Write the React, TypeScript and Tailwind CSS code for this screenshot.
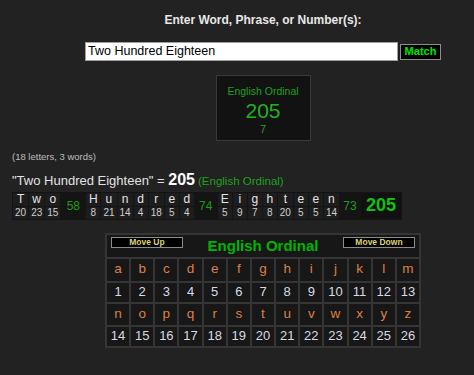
import React from 'react'

const words = [
    { letters: ['T', 'w', 'o'], values: [20, 23, 15], sum: 58, w: 'w-[24px]' },
    { letters: ['H', 'u', 'n', 'd', 'r', 'e', 'd'], values: [8, 21, 14, 4, 18, 5, 4], sum: 74, w: 'w-[22px]' },
    { letters: ['E', 'i', 'g', 'h', 't', 'e', 'e', 'n'], values: [5, 9, 7, 8, 20, 5, 5, 14], sum: 73, w: 'w-[20px]' },
]

const alphabet = 'abcdefghijklmnopqrstuvwxyz'.split('')

function ChartButton({ label }: { label: string }) {
    return (
        <div className="self-start mt-[2px] h-[11px] w-[72px] bg-black border border-[#8c8c8c] flex items-center justify-center text-[8.5px] font-bold leading-none text-[#d9d27a]">
            {label}
        </div>
    )
}

export default function App() {
    const top = alphabet.slice(0, 13)
    const bottom = alphabet.slice(13)

    return (
        <div className="min-h-[375px] w-full bg-[#222222] font-['Liberation_Sans',Arial,sans-serif] overflow-hidden">
            {/* Search block */}
            <div className="pl-[52px] flex flex-col items-center">
                <div className="pt-[13px] text-[12px] leading-[14px] font-bold text-[#e8e8e8]">
                    Enter Word, Phrase, or Number(s):
                </div>
                <div className="mt-[15px] flex items-center gap-[2px]">
                    <div className="w-[313px] h-[19px] bg-white border border-[#a0a0a0] px-[2px] flex items-center text-[12.5px] text-black">
                        Two Hundred Eighteen
                    </div>
                    <div className="w-[41px] h-[16px] bg-black border border-[#8c8c8c] flex items-center justify-center text-[11px] font-bold text-[#00e600]">
                        Match
                    </div>
                </div>
                <div className="mt-[14px] w-[95px] h-[66px] bg-[#121212] border border-[#3a3a3a] flex flex-col items-center">
                    <div className="mt-[9px] text-[10.5px] leading-[12px] text-[#20a020]">English Ordinal</div>
                    <div className="mt-[3px] text-[21px] leading-[22px] text-[#22b022]">205</div>
                    <div className="mt-[1px] text-[11px] leading-[12px] text-[#20a020]">7</div>
                </div>
            </div>

            {/* Breakdown */}
            <div className="px-[12px]">
                <div className="mt-[10px] text-[9.5px] leading-[12px] text-[#bdbdbd]">(18 letters, 3 words)</div>
                <div className="mt-[5px] h-[18px] flex items-baseline text-[13px] text-[#e2e2e2]">
                    <span>"Two Hundred Eighteen" =&nbsp;</span>
                    <span className="text-[16px] font-bold text-white">205</span>
                    <span className="ml-[3px] text-[11.5px] text-[#1ea01e]">(English Ordinal)</span>
                </div>
                <div className="mt-[3px] inline-flex bg-[#141414] p-px gap-px h-[28px]">
                    {words.map((word, wi) => (
                        <React.Fragment key={wi}>
                            {word.letters.map((l, i) => (
                                <div key={i} className="flex flex-col gap-px">
                                    <div className="h-[13px] min-w-[14px] px-[2px] bg-[#1d1d1d] flex items-center justify-center text-[12px] text-[#e4e4e4]">
                                        {l}
                                    </div>
                                    <div className="h-[12px] min-w-[14px] px-[2px] bg-[#1d1d1d] flex items-center justify-center text-[10px] text-[#cfcfcf]">
                                        {word.values[i]}
                                    </div>
                                </div>
                            ))}
                            <div className={`${word.w} flex items-center justify-center text-[12px] text-[#1c9c1c]`}>
                                {word.sum}
                            </div>
                        </React.Fragment>
                    ))}
                    <div className="w-[40px] bg-[#111111] flex items-center justify-center text-[18px] font-bold text-[#12c012]">
                        205
                    </div>
                </div>
            </div>

            {/* Cipher chart */}
            <div className="pl-[52px] flex justify-center">
                <div className="mt-[13px] w-[316px] bg-[#353535] p-[2px] flex flex-col gap-[2px]">
                    <div className="h-[22px] bg-[#171717] px-[4px] flex items-center justify-between">
                        <ChartButton label="Move Up" />
                        <div className="text-[15px] font-bold text-[#00b400] leading-none">English Ordinal</div>
                        <ChartButton label="Move Down" />
                    </div>
                    {[top, bottom].map((row, ri) => (
                        <React.Fragment key={ri}>
                            <div className="grid grid-cols-[repeat(13,minmax(0,1fr))] gap-[2px]">
                                {row.map((c) => (
                                    <div key={c} className={`${ri === 0 ? 'h-[22px]' : 'h-[21px]'} bg-[#171717] flex items-center justify-center text-[13.5px] text-[#de7f46]`}>
                                        {c}
                                    </div>
                                ))}
                            </div>
                            <div className="grid grid-cols-[repeat(13,minmax(0,1fr))] gap-[2px]">
                                {row.map((c, i) => (
                                    <div key={c} className="h-[19px] bg-[#171717] flex items-center justify-center text-[13px] text-[#d6dce4]">
                                        {ri * 13 + i + 1}
                                    </div>
                                ))}
                            </div>
                        </React.Fragment>
                    ))}
                </div>
            </div>
        </div>
    )
}
